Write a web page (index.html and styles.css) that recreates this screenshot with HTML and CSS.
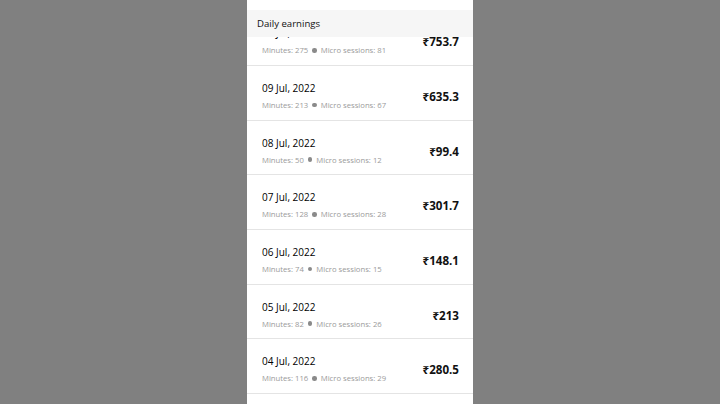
FILE: index.html
```html
<!DOCTYPE html>
<html>
<head>
<meta charset="utf-8">
<link rel="stylesheet" href="styles.css">
</head>
<body>
<div class="phone">
  <div class="header">Daily earnings</div>
  <div class="list">
    <div class="row">
      <div class="info">
        <div class="date">10 Jul, 2022</div>
        <div class="meta">Minutes: 275 <span class="dot"></span> Micro sessions: 81</div>
      </div>
      <div class="amount">₹753.7</div>
    </div>
    <div class="row">
      <div class="info">
        <div class="date">09 Jul, 2022</div>
        <div class="meta">Minutes: 213 <span class="dot"></span> Micro sessions: 67</div>
      </div>
      <div class="amount">₹635.3</div>
    </div>
    <div class="row">
      <div class="info">
        <div class="date">08 Jul, 2022</div>
        <div class="meta">Minutes: 50 <span class="dot"></span> Micro sessions: 12</div>
      </div>
      <div class="amount">₹99.4</div>
    </div>
    <div class="row">
      <div class="info">
        <div class="date">07 Jul, 2022</div>
        <div class="meta">Minutes: 128 <span class="dot"></span> Micro sessions: 28</div>
      </div>
      <div class="amount">₹301.7</div>
    </div>
    <div class="row">
      <div class="info">
        <div class="date">06 Jul, 2022</div>
        <div class="meta">Minutes: 74 <span class="dot"></span> Micro sessions: 15</div>
      </div>
      <div class="amount">₹148.1</div>
    </div>
    <div class="row">
      <div class="info">
        <div class="date">05 Jul, 2022</div>
        <div class="meta">Minutes: 82 <span class="dot"></span> Micro sessions: 26</div>
      </div>
      <div class="amount">₹213</div>
    </div>
    <div class="row">
      <div class="info">
        <div class="date">04 Jul, 2022</div>
        <div class="meta">Minutes: 116 <span class="dot"></span> Micro sessions: 29</div>
      </div>
      <div class="amount">₹280.5</div>
    </div>
  </div>
</div>
</body>
</html>
```
FILE: styles.css
```css
html, body {
  margin: 0;
  padding: 0;
  background: #808080;
  height: 404px;
  overflow: hidden;
}
.phone {
  position: relative;
  width: 226px;
  height: 404px;
  margin-left: 247px;
  background: #ffffff;
  overflow: hidden;
  font-family: "Open Sans", "Noto Sans", sans-serif;
}
.header {
  position: absolute;
  top: 10px;
  left: 0;
  right: 0;
  height: 27px;
  background: #f6f6f6;
  color: #111;
  font-size: 9.6px;
  font-weight: 500;
  line-height: 27px;
  padding-left: 10px;
  z-index: 2;
}
.list {
  padding-top: 11.3px;
}
.row {
  box-sizing: border-box;
  height: 54.7px;
  border-bottom: 1.5px solid #e4e4e4;
  display: flex;
  justify-content: space-between;
  align-items: flex-start;
  padding: 0 14px 0 15px;
}
.info {
  display: flex;
  flex-direction: column;
  padding-top: 15px;
}
.date {
  font-size: 10px;
  line-height: 14px;
  font-weight: 500;
  color: #000;
}
.meta {
  margin-top: 5px;
  font-size: 7.7px;
  line-height: 10px;
  color: #9a9a9a;
  display: flex;
  align-items: center;
  white-space: nowrap;
}
.dot {
  display: inline-block;
  width: 4.5px;
  height: 4.5px;
  border-radius: 50%;
  background: #8a8a8a;
  margin: 0 4px;
}
.amount {
  padding-top: 23px;
  font-size: 11.6px;
  line-height: 16px;
  font-weight: 700;
  color: #111;
}
```
